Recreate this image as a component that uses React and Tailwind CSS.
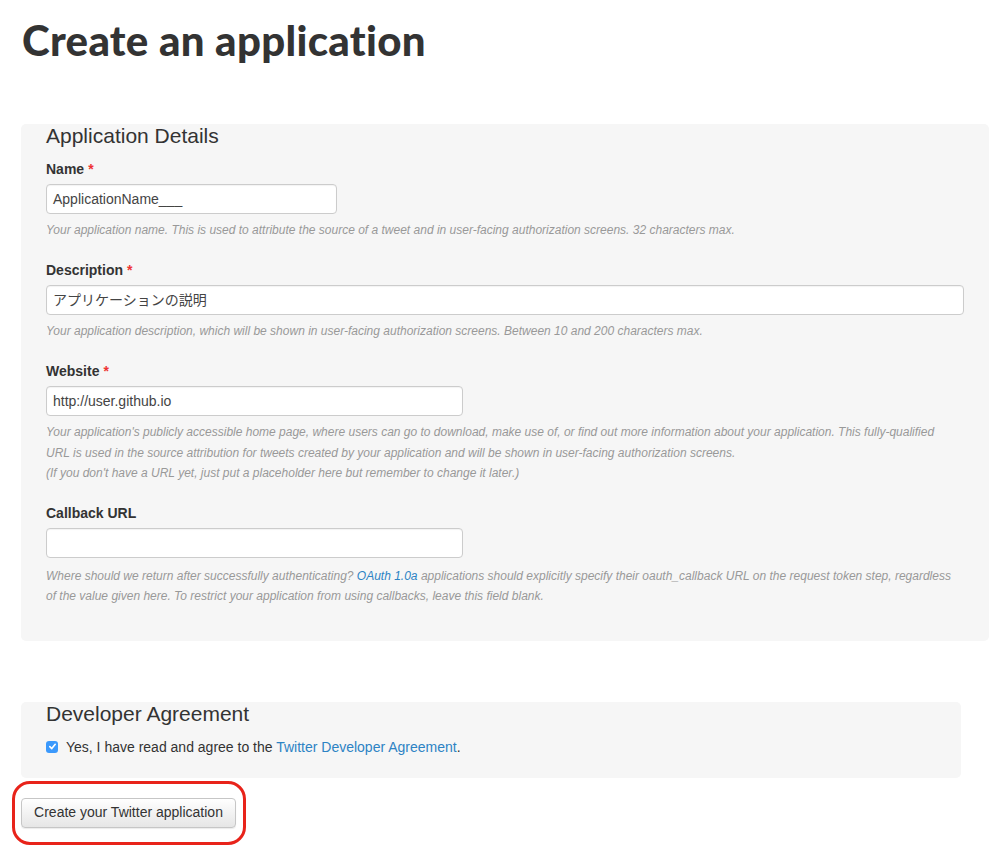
import React from 'react';

const sans = { fontFamily: '"Liberation Sans", Arial, "Noto Sans CJK JP", sans-serif' };

const Label = ({ children, required }) => (
  <div className="text-[14px] font-bold leading-[20px] text-[#333]">
    {children}
    {required && <span className="ml-1 text-[#e33]">*</span>}
  </div>
);

const TextInput = ({ value, width }) => (
  <div
    className={`mt-[5px] h-[30px] ${width} rounded-[4px] border border-[#ccc] bg-white px-[6px] text-[14px] leading-[28px] text-[#444] shadow-[inset_0_1px_1px_rgba(0,0,0,0.05)]`}
  >
    {value}
  </div>
);

const Help = ({ children, className = 'mt-[6px]' }) => (
  <div className={`${className} text-[12px] italic leading-[20.5px] text-[#999]`}>{children}</div>
);

export default function App() {
  return (
    <div className="min-h-[848px] bg-white pl-[21px] pr-[12px] text-[#333]" style={sans}>
      <h1
        className="pt-[15px] pl-[1px] text-[42px] font-black leading-[50px] tracking-[0.3px] text-[#333]"
        style={{ fontFamily: 'Lato, "Open Sans", sans-serif' }}
      >
        Create an application
      </h1>

      {/* Application details */}
      <div className="mt-[59px] rounded-[5px] bg-[#f6f6f6] pl-[25px] pr-[25px] pb-[34px]">
        <div className="text-[21px] leading-[24px] text-[#333]">Application Details</div>

        <div className="mt-[11px]">
          <Label required>Name</Label>
          <TextInput value="ApplicationName___" width="w-[291px]" />
          <Help>
            Your application name. This is used to attribute the source of a tweet and in user-facing authorization screens. 32 characters max.
          </Help>
        </div>

        <div className="mt-[19px]">
          <Label required>Description</Label>
          <TextInput value="アプリケーションの説明" width="w-full" />
          <Help>
            Your application description, which will be shown in user-facing authorization screens. Between 10 and 200 characters max.
          </Help>
        </div>

        <div className="mt-[20px]">
          <Label required>Website</Label>
          <TextInput value="http://user.github.io" width="w-[417px]" />
          <Help>
            Your application's publicly accessible home page, where users can go to download, make use of, or find out more information about your application. This fully-qualified
            <br />
            URL is used in the source attribution for tweets created by your application and will be shown in user-facing authorization screens.
            <br />
            (If you don't have a URL yet, just put a placeholder here but remember to change it later.)
          </Help>
        </div>

        <div className="mt-[19px]">
          <Label>Callback URL</Label>
          <TextInput value="" width="w-[417px]" />
          <Help className="mt-[8px]">
            Where should we return after successfully authenticating? <span className="text-[#2d83c4]">OAuth 1.0a</span> applications should explicitly specify their oauth_callback URL on the request token step, regardless
            <br />
            of the value given here. To restrict your application from using callbacks, leave this field blank.
          </Help>
        </div>
      </div>

      {/* Developer agreement */}
      <div className="mt-[61px] w-[940px] rounded-[5px] bg-[#f6f6f6] pl-[25px] pb-[21px]">
        <div className="text-[21px] leading-[24px] text-[#333]">Developer Agreement</div>
        <div className="mt-[11px] flex items-center gap-[8px] text-[14px] leading-[20px]">
          <span className="flex h-[12px] w-[12px] items-center justify-center rounded-[3px] bg-[#3b99fc]">
            <svg width="9" height="9" viewBox="0 0 10 10" fill="none">
              <path d="M2 5.2 L4.2 7.3 L8 2.6" stroke="white" strokeWidth="1.8" strokeLinecap="round" strokeLinejoin="round" />
            </svg>
          </span>
          <span>
            Yes, I have read and agree to the <span className="text-[#2d83c4]">Twitter Developer Agreement</span>.
          </span>
        </div>
      </div>

      <div className="relative mt-[20px] w-[215px]">
        <button className="h-[30px] w-[215px] rounded-[4px] border border-[#c6c6c6] bg-gradient-to-b from-white to-[#e6e6e6] text-[14px] text-[#333] shadow-[0_1px_1px_rgba(0,0,0,0.08)]">
          Create your Twitter application
        </button>
        <div className="pointer-events-none absolute -left-[9px] -top-[17px] h-[64px] w-[234px] rounded-[18px] border-[3px] border-[#e8231a]" />
      </div>
    </div>
  );
}
